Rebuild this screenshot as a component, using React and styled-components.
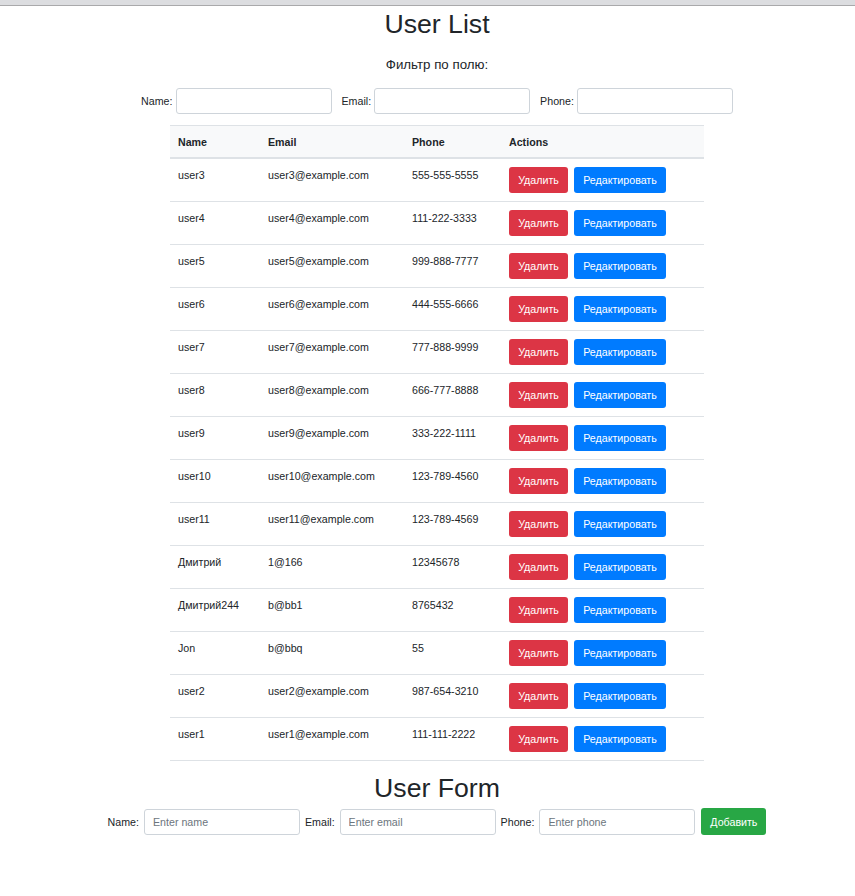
import React from "react";
import styled, { createGlobalStyle } from "styled-components";

const GlobalStyle = createGlobalStyle`
  html, body {
    margin: 0;
    padding: 0;
    background: #fff;
    overflow-x: hidden;
  }
  body {
    font-family: "Liberation Sans", Arial, sans-serif;
    font-size: 10.67px;
    line-height: 1.5;
    color: #212529;
  }
`;

const users = [
  { name: "user3", email: "user3@example.com", phone: "555-555-5555" },
  { name: "user4", email: "user4@example.com", phone: "111-222-3333" },
  { name: "user5", email: "user5@example.com", phone: "999-888-7777" },
  { name: "user6", email: "user6@example.com", phone: "444-555-6666" },
  { name: "user7", email: "user7@example.com", phone: "777-888-9999" },
  { name: "user8", email: "user8@example.com", phone: "666-777-8888" },
  { name: "user9", email: "user9@example.com", phone: "333-222-1111" },
  { name: "user10", email: "user10@example.com", phone: "123-789-4560" },
  { name: "user11", email: "user11@example.com", phone: "123-789-4569" },
  { name: "Дмитрий", email: "1@166", phone: "12345678" },
  { name: "Дмитрий244", email: "b@bb1", phone: "8765432" },
  { name: "Jon", email: "b@bbq", phone: "55" },
  { name: "user2", email: "user2@example.com", phone: "987-654-3210" },
  { name: "user1", email: "user1@example.com", phone: "111-111-2222" },
];

const TopStrip = styled.div`
  height: 5px;
  background: #dcdde0;
  border-bottom: 1px solid #a9a9ab;
`;

const Page = styled.div`
  width: 874px;
  display: flex;
  flex-direction: column;
  align-items: center;
`;

const Title = styled.h1`
  margin: ${(p) => (p.$bottom ? "11px 0 4px" : "2px 0 0")};
  font-size: 26.67px;
  font-weight: 400;
  line-height: 1.2;
`;

const Subtitle = styled.div`
  margin-top: 15px;
  font-size: 13.3px;
  line-height: 20px;
`;

const FilterRow = styled.div`
  display: flex;
  align-items: center;
  gap: 10px;
  margin-top: 13px;
  margin-bottom: 11px;
`;

const Field = styled.label`
  display: flex;
  align-items: center;
  gap: ${(p) => p.$gap || 3}px;
`;

const Input = styled.input`
  box-sizing: border-box;
  width: 156px;
  height: 26px;
  padding: 0 8px;
  border: 1px solid #ced4da;
  border-radius: 3px;
  font-family: inherit;
  font-size: 10.67px;
  color: #495057;
  &::placeholder {
    color: #6c757d;
  }
`;

const Table = styled.table`
  width: 534px;
  border-collapse: collapse;
  table-layout: fixed;
`;

const Th = styled.th`
  box-sizing: border-box;
  width: ${(p) => p.$w}px;
  text-align: left;
  font-weight: 700;
  padding: 8px 8px 7px;
  background: #f8f9fa;
  border-top: 1px solid #dee2e6;
  border-bottom: 2px solid #dee2e6;
  line-height: 16px;
`;

const Td = styled.td`
  padding: 8px;
  vertical-align: top;
  border-top: 1px solid #dee2e6;
  line-height: 16px;
`;

const Row = styled.tr`
  &:last-child td {
    border-bottom: 1px solid #dee2e6;
  }
`;

const Actions = styled.div`
  display: flex;
  gap: 6px;
`;

const Button = styled.button`
  box-sizing: border-box;
  height: 26px;
  padding: 0 8px;
  border: none;
  border-radius: 3px;
  font-family: inherit;
  font-size: 10.67px;
  color: #fff;
  background: ${(p) => p.$bg};
  cursor: pointer;
`;

const FormRow = styled.div`
  display: flex;
  align-items: center;
  gap: 5px;
`;

export default function App() {
  return (
    <>
      <GlobalStyle />
      <TopStrip />
      <Page>
        <Title>User List</Title>
        <Subtitle>Фильтр по полю:</Subtitle>
        <FilterRow>
          <Field>
            Name:
            <Input type="text" />
          </Field>
          <Field>
            Email:
            <Input type="text" />
          </Field>
          <Field>
            Phone:
            <Input type="text" />
          </Field>
        </FilterRow>
        <Table>
          <thead>
            <tr>
              <Th $w={90}>Name</Th>
              <Th $w={144}>Email</Th>
              <Th $w={97}>Phone</Th>
              <Th $w={203}>Actions</Th>
            </tr>
          </thead>
          <tbody>
            {users.map((u, i) => (
              <Row key={i}>
                <Td>{u.name}</Td>
                <Td>{u.email}</Td>
                <Td>{u.phone}</Td>
                <Td>
                  <Actions>
                    <Button $bg="#dc3545" style={{ width: 59 }}>
                      Удалить
                    </Button>
                    <Button $bg="#007bff" style={{ width: 92 }}>
                      Редактировать
                    </Button>
                  </Actions>
                </Td>
              </Row>
            ))}
          </tbody>
        </Table>
        <Title $bottom>User Form</Title>
        <FormRow>
          <Field $gap={5}>
            Name:
            <Input type="text" placeholder="Enter name" />
          </Field>
          <Field $gap={5}>
            Email:
            <Input type="text" placeholder="Enter email" />
          </Field>
          <Field $gap={5}>
            Phone:
            <Input type="text" placeholder="Enter phone" />
          </Field>
          <Button $bg="#28a745" style={{ height: 27, width: 65, marginLeft: 1 }}>
            Добавить
          </Button>
        </FormRow>
      </Page>
    </>
  );
}
